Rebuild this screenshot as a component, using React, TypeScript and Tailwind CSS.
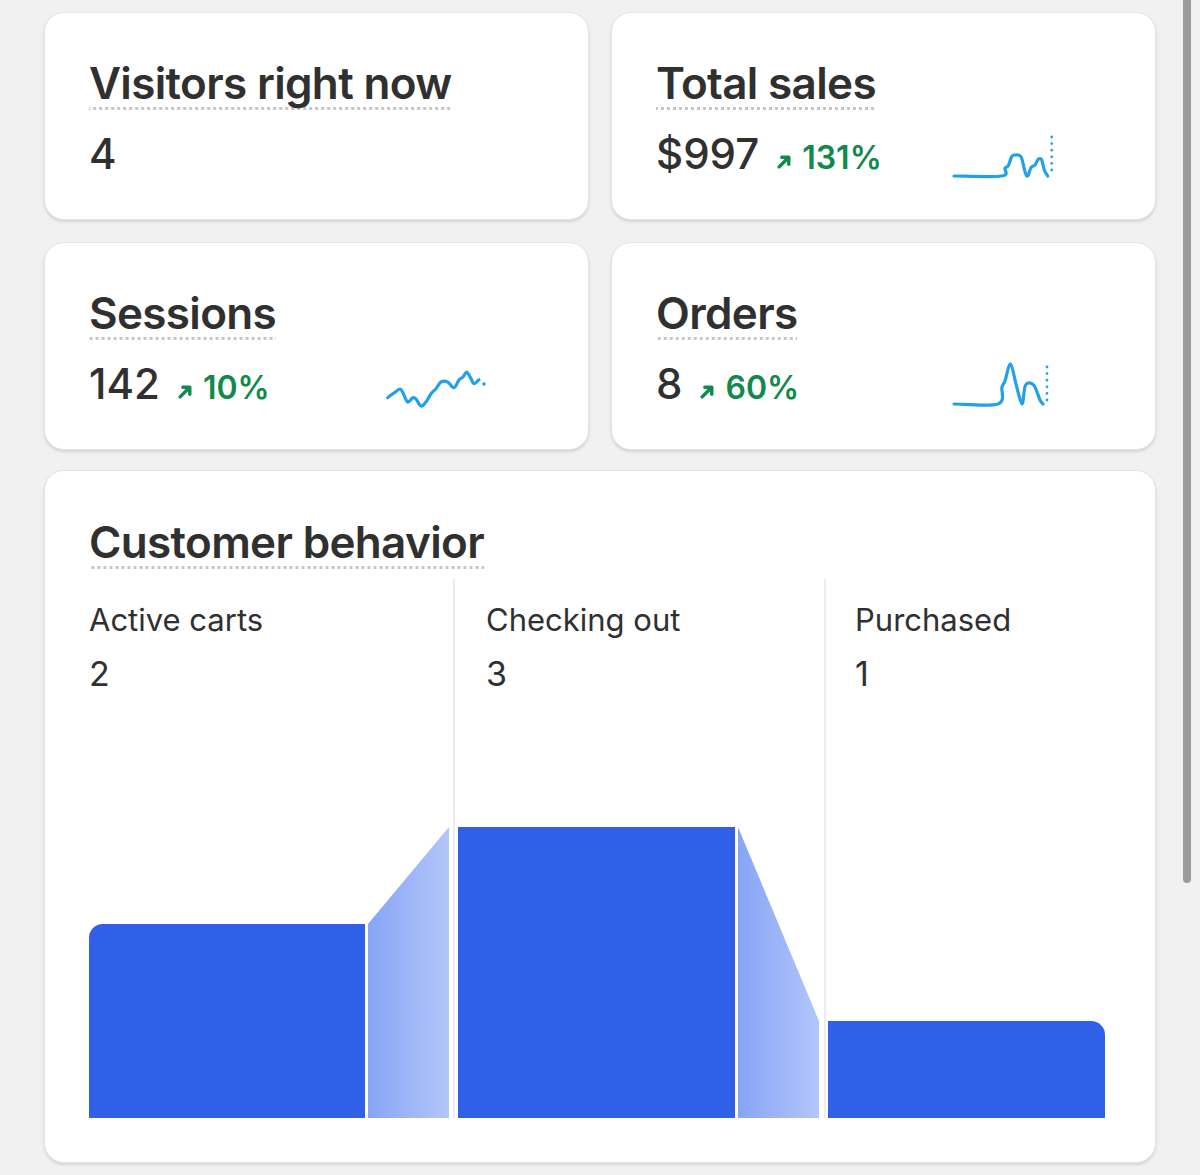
import React from "react";

type Pt = [number, number];

// catmull-rom -> bezier, keeps the sparklines soft like the reference
const smoothPath = (pts: Pt[]) => {
  let d = `M${pts[0][0]} ${pts[0][1]}`;
  for (let i = 0; i < pts.length - 1; i++) {
    const p0 = pts[i - 1] || pts[i];
    const p1 = pts[i];
    const p2 = pts[i + 1];
    const p3 = pts[i + 2] || p2;
    const c1x = p1[0] + (p2[0] - p0[0]) / 6;
    const c1y = p1[1] + (p2[1] - p0[1]) / 6;
    const c2x = p2[0] - (p3[0] - p1[0]) / 6;
    const c2y = p2[1] - (p3[1] - p1[1]) / 6;
    d += ` C${c1x} ${c1y} ${c2x} ${c2y} ${p2[0]} ${p2[1]}`;
  }
  return d;
};

const salesLine: Pt[] = [
  [1, 46], [48.7, 46], [52, 38.3], [55.3, 35.7], [58.7, 26.7], [62, 25], [68, 26.7],
  [72, 41.7], [74.7, 46], [78, 37.7], [82, 35], [85.3, 29.3], [88.7, 30], [91.3, 40], [94.7, 46],
];

const sessionsLine: Pt[] = [
  [1.7, 37.7], [5, 35], [8, 33], [14, 29], [17, 33], [21.7, 42], [26.7, 37.7], [30, 39],
  [35, 46], [40, 42], [45, 33.7], [50, 28.7], [55, 22], [61.7, 22], [68, 27.7], [73, 20],
  [77, 17], [80.7, 12], [85, 18.7], [88, 23.7], [93, 19.7],
];

const ordersLine: Pt[] = [
  [1, 44], [45, 44], [49, 27], [52, 21], [57.5, 4], [63, 24], [69, 44], [72.6, 25],
  [80.6, 25], [87, 40], [90, 44],
];

const Sparkline = ({ points, dotsX, dot }: { points: Pt[]; dotsX?: number; dot?: Pt }) => (
  <svg width="104" height="48" viewBox="0 0 104 48" fill="none" className="shrink-0 overflow-visible">
    <path d={smoothPath(points)} stroke="#24a1e6" strokeWidth="3.2" strokeLinecap="round" strokeLinejoin="round" />
    {dotsX !== undefined && (
      <line x1={dotsX} y1="7" x2={dotsX} y2="41" stroke="#24a1e6" strokeWidth="2.8" strokeLinecap="round" strokeDasharray="0 6.6" />
    )}
    {dot && <circle cx={dot[0]} cy={dot[1]} r="1.8" fill="#24a1e6" />}
  </svg>
);

const UpArrow = () => (
  <svg width="15" height="15" viewBox="0 0 14 14" fill="none" className="ml-[18px] mr-[10px] mb-[8px] shrink-0">
    <path d="M2 12 L10.5 3.5" stroke="#108a4c" strokeWidth="3.2" strokeLinecap="round" />
    <path d="M4.5 3 H11 V9.5" stroke="#108a4c" strokeWidth="3.2" strokeLinecap="round" strokeLinejoin="round" />
  </svg>
);

const Title = ({ children }: { children: React.ReactNode }) => (
  <div className="flex">
    <h2 className="text-[44px] leading-[48px] tracking-[-0.015em] font-semibold text-[#303030] pb-[3px] bg-[linear-gradient(to_right,#c6c6c6_50%,transparent_0)] bg-[length:6px_3px] bg-repeat-x bg-bottom">
      {children}
    </h2>
  </div>
);

const StatCard = ({
  title,
  value,
  change,
  spark,
}: {
  title: string;
  value: string;
  change?: string;
  spark?: React.ReactNode;
}) => (
  <div className="bg-white rounded-[20px] border border-[#e4e4e4] shadow-[0_2px_3px_rgba(0,0,0,0.12)] pt-[46px] pb-[41px] pl-[44px]">
    <Title>{title}</Title>
    <div className="flex items-start h-[48px] mt-[20px]">
      <div className="flex items-baseline w-[297px] h-[48px]">
        <span className="text-[42px] leading-[48px] font-medium text-[#303030]">{value}</span>
        {change && (
          <>
            <UpArrow />
            <span className="text-[32px] leading-[40px] font-semibold text-[#108a4c]">{change}</span>
          </>
        )}
      </div>
      {spark}
    </div>
  </div>
);

const Connector = ({ id, points }: { id: string; points: string }) => (
  <svg width="81" height="291" viewBox="0 0 81 291" className="shrink-0 block">
    <defs>
      <linearGradient id={id} x1="0" y1="0" x2="1" y2="0">
        <stop offset="0" stopColor="#87a4f6" />
        <stop offset="1" stopColor="#b3c6fb" />
      </linearGradient>
    </defs>
    <polygon points={points} fill={`url(#${id})`} />
  </svg>
);

const Step = ({ label, value }: { label: string; value: string }) => (
  <div className="pt-[21px]">
    <div className="text-[31px] leading-[40px] text-[#303030]">{label}</div>
    <div className="text-[34px] leading-[40px] text-[#303030] mt-[14px]">{value}</div>
  </div>
);

export default function App() {
  return (
    <div
      className="relative min-h-[1175px] bg-[#f1f1f1] pt-[12px] pl-[44px]"
      style={{ fontFamily: "Inter, 'Noto Sans', sans-serif" }}
    >
      <div className="w-[1112px] flex flex-col gap-[20px]">
        <div className="grid grid-cols-2 gap-[22px]">
          <StatCard title="Visitors right now" value="4" />
          <StatCard
            title="Total sales"
            value="$997"
            change="131%"
            spark={<Sparkline points={salesLine} dotsX={98.7} />}
          />
          <StatCard
            title="Sessions"
            value="142"
            change="10%"
            spark={<Sparkline points={sessionsLine} dot={[98, 24]} />}
          />
          <StatCard
            title="Orders"
            value="8"
            change="60%"
            spark={<Sparkline points={ordersLine} dotsX={94} />}
          />
        </div>

        {/* Customer behavior funnel */}
        <div className="bg-white rounded-[20px] border border-[#e4e4e4] shadow-[0_2px_3px_rgba(0,0,0,0.12)] pt-[47px] pb-[44px] pl-[44px]">
          <Title>Customer behavior</Title>
          <div className="grid grid-cols-[364px_371px_1fr] h-[539px] mt-[10px]">
            <div className="flex flex-col justify-between">
              <Step label="Active carts" value="2" />
              <div className="flex items-end gap-[3px]">
                <div className="w-[276px] h-[194px] bg-[#305fe8] rounded-tl-[14px]" />
                <Connector id="c1" points="0,97 81,0 81,291 0,291" />
              </div>
            </div>
            <div className="flex flex-col justify-between border-l-2 border-[#ececec]">
              <div className="pl-[31px]">
                <Step label="Checking out" value="3" />
              </div>
              <div className="flex items-end gap-[3px] pl-[3px]">
                <div className="w-[277px] h-[291px] bg-[#305fe8]" />
                <Connector id="c2" points="0,0 81,194 81,291 0,291" />
              </div>
            </div>
            <div className="flex flex-col justify-between border-l-2 border-[#ececec]">
              <div className="pl-[29px]">
                <Step label="Purchased" value="1" />
              </div>
              <div className="flex items-end pl-[2px]">
                <div className="w-[277px] h-[97px] bg-[#305fe8] rounded-tr-[14px]" />
              </div>
            </div>
          </div>
        </div>
      </div>

      {/* overlay scrollbar */}
      <div className="absolute top-0 right-[9px] w-[8px] h-[883px] rounded-b-full bg-[#9b9b9b]" />
    </div>
  );
}
